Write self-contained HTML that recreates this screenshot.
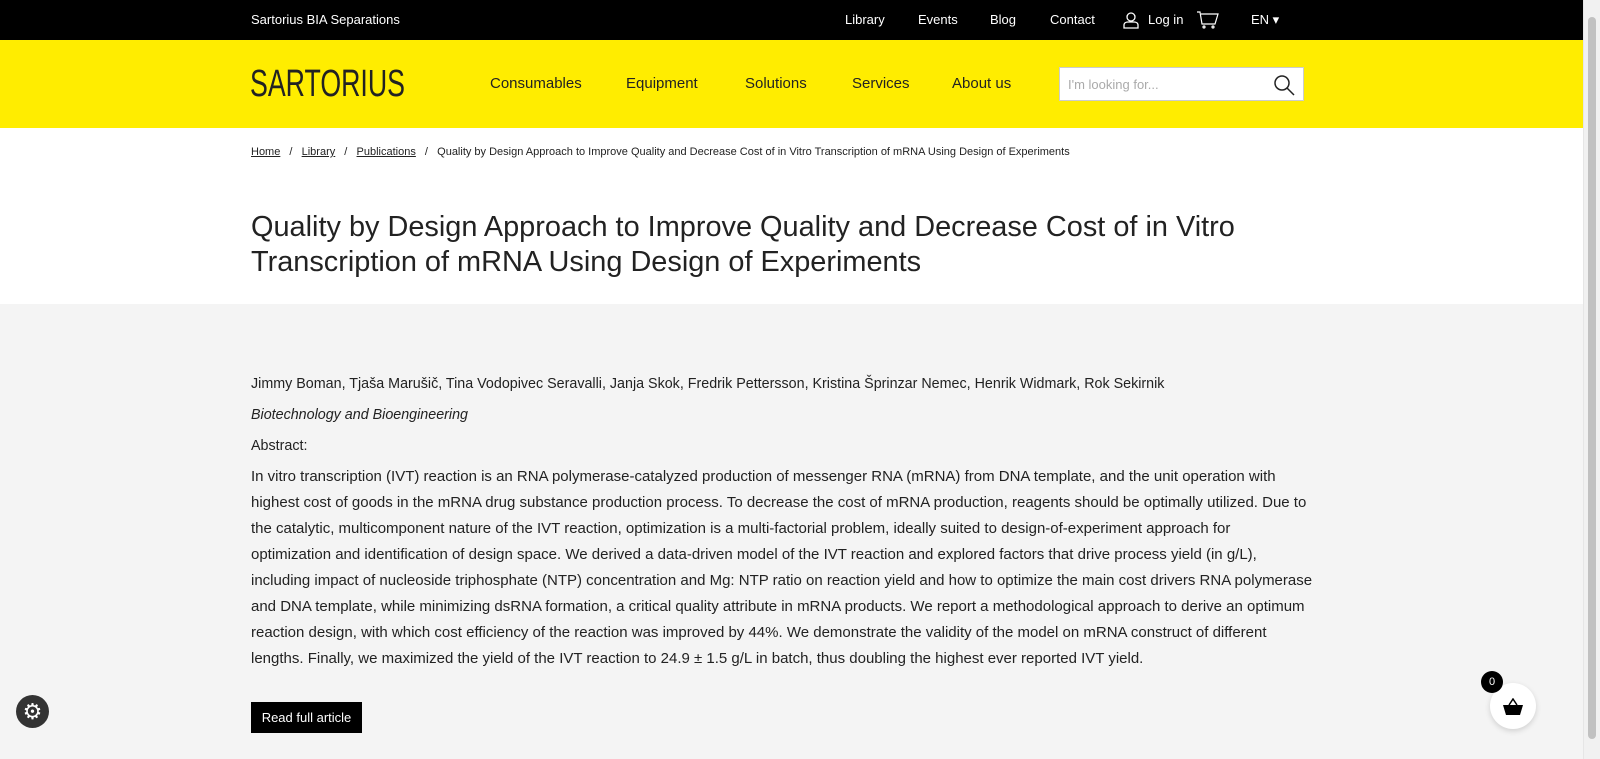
<!DOCTYPE html>
<html><head><meta charset="utf-8"><style>
*{margin:0;padding:0;box-sizing:border-box}
body{width:1600px;height:759px;overflow:hidden;font-family:"Liberation Sans",sans-serif;background:#f4f4f4;position:relative}
.sb{position:absolute;right:0;top:0;width:17px;height:759px;background:#f1f1f1;border-left:1px solid #e6e6e6}
.sb i{position:absolute;left:4px;top:17px;width:8px;height:722px;background:#c1c1c1;border-radius:4px}
.top{height:40px;background:#000;color:#fff;font-size:13px;position:relative;width:1583px}
.top span{position:absolute;top:12px}
.yel{height:88px;background:#ffed00;position:relative;width:1583px}
.nav{position:absolute;font-size:15px;color:#222}
.search{position:absolute;left:1059px;width:245px;height:34px;background:#fff;border:1px solid #ccc;font-size:13px;color:#aaa;padding:9px 8px}
.white{background:#fff;height:176px;position:relative;width:1583px}
.bc{position:absolute;left:251px;top:18px;font-size:11px;color:#222}
.bc u{margin-right:6px}
h1{position:absolute;left:251px;top:82px;font-weight:300;font-size:28.9px;line-height:35px;color:#222;width:1040px}
.main{position:absolute;left:251px;top:371px;width:1062px;font-size:15px;color:#222}
.main p{line-height:26px}
.btn{position:absolute;left:251px;top:702px;width:111px;height:31px;background:#000;color:#fff;font-size:13px;text-align:center;line-height:31px}
</style></head><body>
<div class="top">
<span style="left:251px">Sartorius BIA Separations</span>
<span style="left:845px">Library</span>
<span style="left:918px">Events</span>
<span style="left:990px">Blog</span>
<span style="left:1050px">Contact</span>
<svg style="position:absolute;left:1122px;top:11px" width="18" height="18" viewBox="0 0 18 18" fill="none" stroke="#fff" stroke-width="1.3"><circle cx="9" cy="6" r="4"/><path d="M2 17v-3c0-2 2-3 4-3h6c2 0 4 1 4 3v3z"/></svg>
<span style="left:1148px">Log in</span>
<svg style="position:absolute;left:1196px;top:11px" width="24" height="18" viewBox="0 0 24 18" fill="none" stroke="#fff" stroke-width="1.2"><path d="M1 1h3l2 12h13l3-10H5"/><circle cx="8" cy="16" r="1"/><circle cx="17" cy="16" r="1"/></svg>
<span style="left:1251px">EN &#9662;</span>
</div>
<div class="yel">
<svg style="position:absolute;left:250px;top:28px" width="160" height="32"><text x="0" y="28" font-family="Liberation Sans" font-size="38" fill="#222" textLength="155" lengthAdjust="spacingAndGlyphs">SARTORIUS</text></svg>
<span class="nav" style="left:490px;top:35px">Consumables</span>
<span class="nav" style="left:626px;top:35px">Equipment</span>
<span class="nav" style="left:745px;top:35px">Solutions</span>
<span class="nav" style="left:852px;top:35px">Services</span>
<span class="nav" style="left:952px;top:35px">About us</span>
<div class="search" style="top:27px">I'm looking for...
<svg style="position:absolute;right:8px;top:6px" width="22" height="22" viewBox="0 0 22 22" fill="none" stroke="#222" stroke-width="1.5"><circle cx="9" cy="9" r="7"/><path d="M14 14l7 7"/></svg></div>
</div>
<div class="white">
<div class="bc"><u>Home</u> / &nbsp; <u>Library</u> / &nbsp; <u>Publications</u> / &nbsp; Quality by Design Approach to Improve Quality and Decrease Cost of in Vitro Transcription of mRNA Using Design of Experiments</div>
<h1>Quality by Design Approach to Improve Quality and Decrease Cost of in Vitro Transcription of mRNA Using Design of Experiments</h1>
</div>
<div class="main">
<p style="font-size:14.3px">Jimmy Boman, Tjaša Marušič, Tina Vodopivec Seravalli, Janja Skok, Fredrik Pettersson, Kristina Šprinzar Nemec, Henrik Widmark, Rok Sekirnik</p>
<p style="margin-top:5px;font-size:14.3px"><i>Biotechnology and Bioengineering</i></p>
<p style="margin-top:5px;font-size:14.3px">Abstract:</p>
<p style="margin-top:5px">In vitro transcription (IVT) reaction is an RNA polymerase-catalyzed production of messenger RNA (mRNA) from DNA template, and the unit operation with highest cost of goods in the mRNA drug substance production process. To decrease the cost of mRNA production, reagents should be optimally utilized. Due to the catalytic, multicomponent nature of the IVT reaction, optimization is a multi-factorial problem, ideally suited to design-of-experiment approach for optimization and identification of design space. We derived a data-driven model of the IVT reaction and explored factors that drive process yield (in g/L), including impact of nucleoside triphosphate (NTP) concentration and Mg: NTP ratio on reaction yield and how to optimize the main cost drivers RNA polymerase and DNA template, while minimizing dsRNA formation, a critical quality attribute in mRNA products. We report a methodological approach to derive an optimum reaction design, with which cost efficiency of the reaction was improved by 44%. We demonstrate the validity of the model on mRNA construct of different lengths. Finally, we maximized the yield of the IVT reaction to 24.9 ± 1.5 g/L in batch, thus doubling the highest ever reported IVT yield.</p>
</div>
<div class="btn">Read full article</div>
<div style="position:absolute;left:16px;top:695px;width:33px;height:33px;border-radius:50%;background:#333;color:#fff;font-size:22px;text-align:center;line-height:33px">⚙</div>
<div style="position:absolute;left:1490px;top:683px;width:46px;height:46px;border-radius:50%;background:#fff;box-shadow:0 2px 6px rgba(0,0,0,.15)"></div>
<svg style="position:absolute;left:1502px;top:698px" width="22" height="18" viewBox="0 0 22 18"><path d="M7 7l4-6 4 6" fill="none" stroke="#000" stroke-width="1.5"/><path d="M1 7h20l-3 10H4z" fill="#000"/></svg>
<div style="position:absolute;left:1481px;top:671px;width:22px;height:22px;border-radius:50%;background:#000;color:#fff;font-size:11px;text-align:center;line-height:22px">0</div>
<div class="sb"><i></i></div>
</body></html>
